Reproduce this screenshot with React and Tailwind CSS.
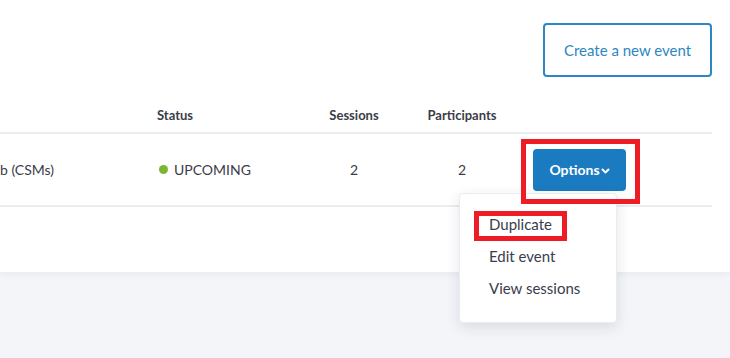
export default function App() {
  return (
    <div className="relative w-[730px] h-[358px] overflow-hidden bg-[#f4f5f9] font-['Lato','Noto_Sans',sans-serif] text-[#3b3f4c]">
      <div className="bg-white h-[272px] pr-[18px] shadow-[0_1px_8px_rgba(30,40,80,0.07)]">
        <div className="flex justify-end pt-[23px]">
          <button className="w-[169px] h-[54px] border-2 border-[#2d87c2] rounded-[4px] text-[#2d87c2] text-[15px] bg-white">
            Create a new event
          </button>
        </div>
        <div className="flex items-center h-[35px] mt-[22px] border-b-2 border-[#ececf1] text-[13px] font-bold text-[#3a3d48]">
          <div className="w-[157px]" />
          <div className="w-[150px]">Status</div>
          <div className="w-[94px] text-center">Sessions</div>
          <div className="w-[122px] text-center">Participants</div>
        </div>
        <div className="flex items-center h-[73px] border-b-2 border-[#ececf1] text-[14px] text-[#3a3d48]">
          <div className="w-[157px]">b (CSMs)</div>
          <div className="w-[150px] flex items-center gap-[6px]">
            <span className="inline-block w-[9px] h-[9px] rounded-full bg-[#7ab730] ml-[2px]" />
            <span>UPCOMING</span>
          </div>
          <div className="w-[94px] text-center">2</div>
          <div className="w-[122px] text-center">2</div>
          <div className="pl-[10px]">
            <button className="w-[93px] h-[42px] rounded-[4px] bg-[#1b7bc1] text-white text-[14px] font-bold flex items-center justify-center">
              <span>Options</span>
              <svg width="9" height="7" viewBox="0 0 9 7" className="ml-[1px] mt-[3px]">
                <polyline points="1.5,1.5 4.5,4.5 7.5,1.5" fill="none" stroke="white" strokeWidth="2" strokeLinecap="round" strokeLinejoin="round" />
              </svg>
            </button>
          </div>
        </div>
      </div>

      <div className="absolute left-[459px] top-[193px] w-[158px] pt-[14px] pb-[18px] bg-white rounded-[4px] border border-[#ebecf0] shadow-[0_4px_14px_rgba(20,30,60,0.12)] text-[15px] text-[#3a3d4d]">
        <div className="h-[32px] flex items-center pl-[29px]">Duplicate</div>
        <div className="h-[32px] flex items-center pl-[29px]">Edit event</div>
        <div className="h-[32px] flex items-center pl-[29px]">View sessions</div>
      </div>

      <div className="absolute left-[521px] top-[139px] w-[119px] h-[65px] border-[5px] border-[#ee1c25]" />
      <div className="absolute left-[474px] top-[211px] w-[93px] h-[30px] border-[5px] border-[#ee1c25]" />
    </div>
  );
}
